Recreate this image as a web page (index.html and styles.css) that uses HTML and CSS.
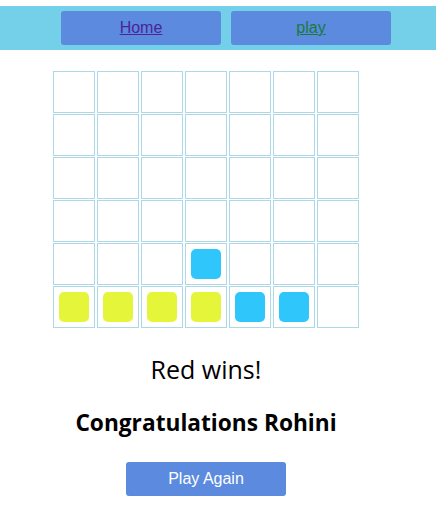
FILE: index.html
```html
<!DOCTYPE html>
<html>
<head>
<meta charset="utf-8">
<link rel="stylesheet" href="styles.css">
</head>
<body>
<header class="topbar">
  <nav class="nav">
    <a class="nav-btn home" href="#">Home</a>
    <a class="nav-btn play" href="#">play</a>
  </nav>
</header>
<main class="main">
  <div class="board">
    <div class="cell"></div><div class="cell"></div><div class="cell"></div><div class="cell"></div><div class="cell"></div><div class="cell"></div><div class="cell"></div>
    <div class="cell"></div><div class="cell"></div><div class="cell"></div><div class="cell"></div><div class="cell"></div><div class="cell"></div><div class="cell"></div>
    <div class="cell"></div><div class="cell"></div><div class="cell"></div><div class="cell"></div><div class="cell"></div><div class="cell"></div><div class="cell"></div>
    <div class="cell"></div><div class="cell"></div><div class="cell"></div><div class="cell"></div><div class="cell"></div><div class="cell"></div><div class="cell"></div>
    <div class="cell"></div><div class="cell"></div><div class="cell"></div><div class="cell"><span class="piece blue"></span></div><div class="cell"></div><div class="cell"></div><div class="cell"></div>
    <div class="cell"><span class="piece yellow"></span></div><div class="cell"><span class="piece yellow"></span></div><div class="cell"><span class="piece yellow"></span></div><div class="cell"><span class="piece yellow"></span></div><div class="cell"><span class="piece blue"></span></div><div class="cell"><span class="piece blue"></span></div><div class="cell"></div>
  </div>
  <p class="result">Red wins!</p>
  <h2 class="congrats">Congratulations Rohini</h2>
  <button class="again">Play Again</button>
</main>
</body>
</html>
```
FILE: styles.css
```css
html, body {
  margin: 0;
  padding: 0;
  background: #ffffff;
}
body {
  font-family: "Open Sans", "Noto Sans", sans-serif;
}
.topbar {
  margin-top: 6px;
  height: 44px;
  background: #74cfe8;
  display: flex;
  align-items: center;
  justify-content: center;
  padding-left: 16px;
}
.nav {
  display: flex;
  gap: 10px;
}
.nav-btn {
  width: 160px;
  height: 34px;
  background: #5b8ade;
  border-radius: 3px;
  display: flex;
  align-items: center;
  justify-content: center;
  font-family: "Liberation Sans", Arial, sans-serif;
  font-size: 16px;
}
.home { color: #4b2499; }
.play { color: #197a3c; }
.main {
  width: 412px;
  display: flex;
  flex-direction: column;
  align-items: center;
  padding-top: 21px;
}
.board {
  display: grid;
  grid-template-columns: repeat(7, 42px);
  grid-auto-rows: 42px;
  column-gap: 2px;
  row-gap: 1px;
}
.cell {
  box-sizing: border-box;
  border: 1px solid #add8e6;
  display: flex;
  align-items: center;
  justify-content: center;
}
.piece {
  width: 30px;
  height: 30px;
  border-radius: 5px;
}
.yellow { background: #e4f53a; }
.blue { background: #2ec6fb; }
.result {
  margin: 24px 0 0;
  font-size: 25px;
  line-height: 34px;
  color: #000;
}
.congrats {
  margin: 22px 0 0;
  font-size: 22.7px;
  line-height: 30px;
  font-weight: 700;
  color: #000;
}
.again {
  margin-top: 24px;
  width: 160px;
  height: 34px;
  border: none;
  border-radius: 3px;
  background: #5b8ade;
  color: #ffffff;
  font-family: "Liberation Sans", Arial, sans-serif;
  font-size: 16px;
}
```
